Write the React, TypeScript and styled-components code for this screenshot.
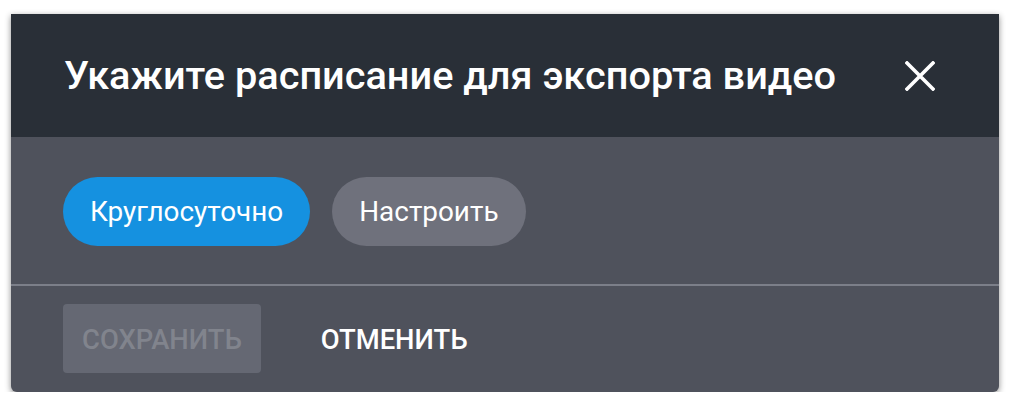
import React from "react";
import styled, { createGlobalStyle } from "styled-components";

const GlobalStyle = createGlobalStyle`
  html, body {
    margin: 0;
    padding: 0;
    background: #ffffff;
  }
  body {
    font-family: Roboto, "Noto Sans", sans-serif;
  }
`;

const Page = styled.div`
  padding: 14px 0 0 11px;
`;

const Dialog = styled.div`
  width: 988px;
  display: flex;
  flex-direction: column;
  background-color: #4f525c;
  border-radius: 0 0 6px 6px;
  box-shadow: 0 2px 6px rgba(0, 0, 0, 0.45);
  overflow: hidden;
`;

const Header = styled.header`
  height: 123px;
  display: flex;
  align-items: center;
  justify-content: space-between;
  padding: 0 62px 0 53px;
  background-color: #292f37;
  box-sizing: border-box;
`;

const Title = styled.h2`
  margin: 0;
  color: #ffffff;
  font-size: 39.7px;
  font-weight: 500;
  white-space: nowrap;
`;

const CloseButton = styled.button`
  width: 34px;
  height: 34px;
  padding: 0;
  border: none;
  background: transparent;
  display: flex;
  align-items: center;
  justify-content: center;
  cursor: pointer;
`;

const Body = styled.section`
  display: flex;
  flex-direction: row;
  gap: 22px;
  padding: 40px 52px 38px;
  border-bottom: 2px solid #7c7f89;
`;

const Pill = styled.button<{ $active?: boolean }>`
  height: 69px;
  padding: 0 27px;
  border: none;
  border-radius: 35px;
  background-color: ${(p) => (p.$active ? "#1591e0" : "#6f717c")};
  color: #ffffff;
  font-family: Roboto, sans-serif;
  font-size: 27.9px;
  font-weight: 400;
  cursor: pointer;
`;

const Footer = styled.footer`
  display: flex;
  flex-direction: row;
  align-items: center;
  gap: 42px;
  padding: 18px 52px 19px;
`;

const ActionButton = styled.button<{ $disabled?: boolean }>`
  height: 69px;
  padding: 0 ${(p) => (p.$disabled ? "19px" : "18px")};
  border: none;
  border-radius: 4px;
  background-color: ${(p) => (p.$disabled ? "#656873" : "transparent")};
  color: ${(p) => (p.$disabled ? "#81848d" : "#ffffff")};
  font-family: Roboto, sans-serif;
  font-size: 27.4px;
  font-weight: 500;
  text-transform: uppercase;
  padding-top: 3px;
`;

export default function App() {
  return (
    <>
      <GlobalStyle />
      <Page>
        <Dialog>
          <Header>
            <Title>Укажите расписание для экспорта видео</Title>
            <CloseButton aria-label="Закрыть">
              <svg width="30" height="30" viewBox="0 0 30 30">
                <path
                  d="M2 2 L28 28 M28 2 L2 28"
                  stroke="#ffffff"
                  strokeWidth="3.6"
                  strokeLinecap="square"
                />
              </svg>
            </CloseButton>
          </Header>
          <Body>
            <Pill $active>Круглосуточно</Pill>
            <Pill>Настроить</Pill>
          </Body>
          <Footer>
            <ActionButton $disabled disabled>
              Сохранить
            </ActionButton>
            <ActionButton>Отменить</ActionButton>
          </Footer>
        </Dialog>
      </Page>
    </>
  );
}
